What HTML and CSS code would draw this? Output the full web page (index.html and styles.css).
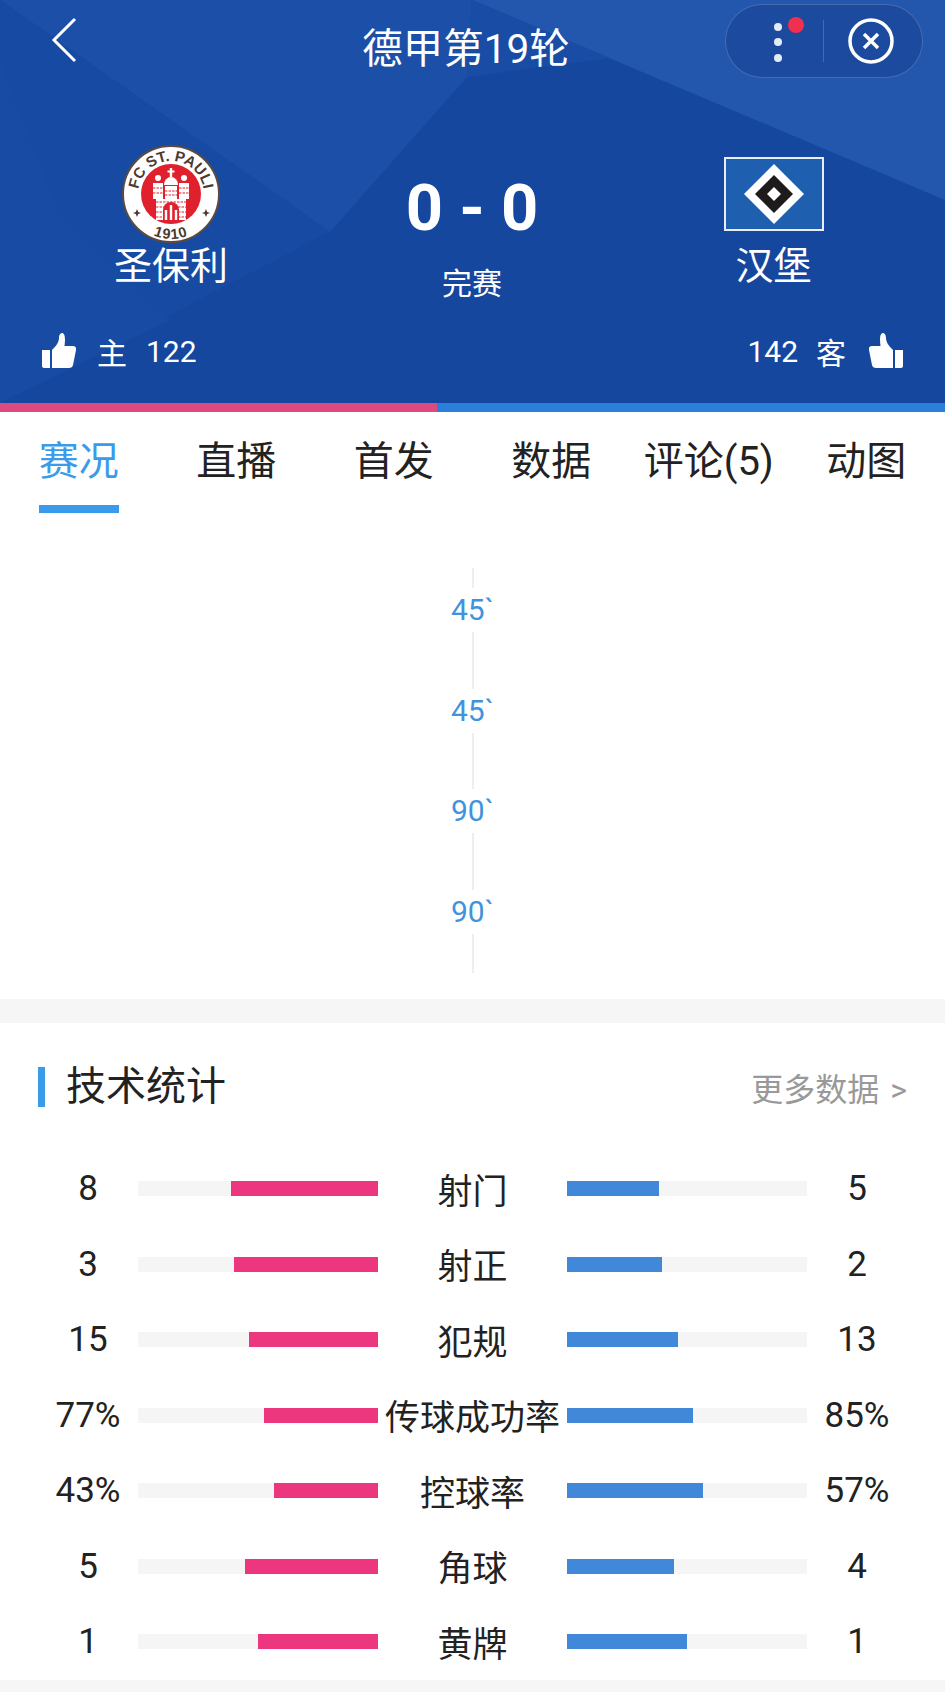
FILE: index.html
```html
<!DOCTYPE html>
<html lang="zh-CN">
  <head>
    <meta charset="UTF-8" />
    <meta name="viewport" content="width=device-width, initial-scale=1.0" />
    <title>德甲第19轮</title>
    <link rel="stylesheet" href="styles.css">
  </head>
  <body>
    <header class="match">
      <svg class="match-bg" viewBox="0 0 945 403" aria-hidden="true">
        <polygon points="0,0 472,0 467,77 330,232" fill="#1c50a8" />
        <polygon points="472,0 945,0 945,200" fill="#2257ad" />
        <polygon points="467,77 472,0 610,58" fill="#194da5" />
        <polygon points="0,0 330,232 0,403" fill="#174aa2" />
        <polygon points="60,215 170,320 0,403 0,60" fill="#184ba3" />
      </svg>

      <div class="topbar">
        <svg class="back" viewBox="0 0 26 46" width="26" height="46">
          <path d="M24 2 L3 23 L24 44" fill="none" stroke="#fff" stroke-width="3" />
        </svg>
        <h1 class="round">德甲第19轮</h1>
        <div class="capsule">
          <svg class="more" viewBox="0 0 40 50" width="40" height="50">
            <circle cx="10" cy="11" r="4" fill="#e4ebf6" />
            <circle cx="10" cy="26" r="4" fill="#e4ebf6" />
            <circle cx="10" cy="42" r="4" fill="#e4ebf6" />
            <circle cx="28" cy="9" r="8" fill="#f0304f" />
          </svg>
          <span class="capsule-line"></span>
          <svg class="close" viewBox="0 0 46 46" width="46" height="46">
            <circle cx="23" cy="23" r="21" fill="none" stroke="#fff" stroke-width="3.5" />
            <path d="M16 16 L30 30 M30 16 L16 30" fill="none" stroke="#fff" stroke-width="3.5" />
          </svg>
        </div>
      </div>

      <div class="teams">
        <div class="team">
          <div class="crest-box">
            <svg class="crest" viewBox="0 0 98 98" width="98" height="98">
              <defs>
                <path id="arcTop" d="M16 49 A33 33 0 0 1 82 49" />
                <path id="arcBottom" d="M4 49 A45 45 0 0 0 94 49" />
              </defs>
              <circle cx="49" cy="49" r="48" fill="#fff" stroke="#5b4a40" stroke-width="2" />
              <circle cx="49" cy="49" r="30" fill="#e0202c" />
              <text class="crest-text"><textPath href="#arcTop" startOffset="50%" text-anchor="middle">FC ST. PAULI</textPath></text>
              <text class="crest-year"><textPath href="#arcBottom" startOffset="50%" text-anchor="middle">1910</textPath></text>
              <polygon points="15,64 16.2,67 19,68 16.2,69 15,72 13.8,69 11,68 13.8,67" fill="#4a3a30" />
              <polygon points="84,64 85.2,67 88,68 85.2,69 84,72 82.8,69 80,68 82.8,67" fill="#4a3a30" />
              <g fill="#fff">
                <rect x="47.8" y="23" width="2.4" height="9" />
                <rect x="45.5" y="25.5" width="7" height="2" />
                <path d="M42 40 A7 8 0 0 1 56 40 Z" />
                <circle cx="36" cy="33" r="3" />
                <circle cx="62" cy="33" r="3" />
                <rect x="31" y="38" width="10" height="16" />
                <rect x="43" y="41" width="12" height="13" />
                <rect x="57" y="38" width="10" height="16" />
                <rect x="34" y="54" width="30" height="21" />
              </g>
              <g class="bricks">
                <path d="M31 43 H41 M31 48 H41 M43 46 H55 M43 50 H55 M57 43 H67 M57 48 H67" />
                <path d="M34 57 H64 M34 62 H42 M56 62 H64 M34 67 H42 M56 67 H64 M34 72 H42 M56 72 H64" />
              </g>
              <path d="M41 75 V65 A8 8 0 0 1 57 65 V75 Z" fill="#e0202c" />
              <path d="M44 75 V65 M49 75 V60 M54 75 V65" stroke="#fff" stroke-width="2.4" fill="none" />
            </svg>
          </div>
          <div class="team-name">圣保利</div>
        </div>

        <div class="result">
          <div class="score">0 - 0</div>
          <div class="status">完赛</div>
        </div>

        <div class="team">
          <div class="crest-box">
            <svg class="crest" viewBox="0 0 100 74" width="100" height="74">
              <rect x="1" y="1" width="98" height="72" fill="#1f5fb0" stroke="#e8eef6" stroke-width="2" />
              <polygon points="50,7 80,37 50,67 20,37" fill="#fff" />
              <polygon points="50,18 69,37 50,56 31,37" fill="#1d1b1c" />
              <polygon points="50,30 57,37 50,44 43,37" fill="#fff" />
            </svg>
          </div>
          <div class="team-name">汉堡</div>
        </div>
      </div>

      <div class="likes">
        <div class="like like-home">
          <svg class="thumb" viewBox="0 0 34 36" width="34" height="36">
            <path d="M0 17 H8 V35 H2 C1 35 0 34 0 33 Z M10 17 C13 14 17 10 17 5 C17 1 19 0 20.5 0 C23 1 23.5 5 22.5 13 H31 C33.5 13 34.5 15 34 17 L31 32 C30.7 34 29 35 27 35 H10 Z" fill="#fff" />
          </svg>
          <span class="side">主</span>
          <span>122</span>
        </div>
        <div class="like like-away">
          <span>142</span>
          <span class="side">客</span>
          <svg class="thumb thumb-away" viewBox="0 0 34 36" width="34" height="36">
            <path d="M0 17 H8 V35 H2 C1 35 0 34 0 33 Z M10 17 C13 14 17 10 17 5 C17 1 19 0 20.5 0 C23 1 23.5 5 22.5 13 H31 C33.5 13 34.5 15 34 17 L31 32 C30.7 34 29 35 27 35 H10 Z" fill="#fff" />
          </svg>
        </div>
      </div>
    </header>

    <div class="support">
      <div class="support-home"></div>
      <div class="support-away"></div>
    </div>

    <nav class="tabs">
      <div class="tab active"><span>赛况</span></div>
      <div class="tab"><span>直播</span></div>
      <div class="tab"><span>首发</span></div>
      <div class="tab"><span>数据</span></div>
      <div class="tab"><span>评论(5)</span></div>
      <div class="tab"><span>动图</span></div>
    </nav>

    <section class="timeline">
      <div class="axis">
        <div class="minute">45`</div>
        <div class="minute">45`</div>
        <div class="minute">90`</div>
        <div class="minute">90`</div>
      </div>
    </section>

    <div class="band"></div>

    <section class="stats">
      <div class="stats-head">
        <h2>技术统计</h2>
        <span class="more-data">更多数据 &gt;</span>
      </div>

      <div class="stat">
        <div class="value">8</div>
        <div class="track home"><div class="fill" style="width: 147px"></div></div>
        <div class="label">射门</div>
        <div class="track away"><div class="fill" style="width: 92px"></div></div>
        <div class="value">5</div>
      </div>
      <div class="stat">
        <div class="value">3</div>
        <div class="track home"><div class="fill" style="width: 144px"></div></div>
        <div class="label">射正</div>
        <div class="track away"><div class="fill" style="width: 95px"></div></div>
        <div class="value">2</div>
      </div>
      <div class="stat">
        <div class="value">15</div>
        <div class="track home"><div class="fill" style="width: 129px"></div></div>
        <div class="label">犯规</div>
        <div class="track away"><div class="fill" style="width: 111px"></div></div>
        <div class="value">13</div>
      </div>
      <div class="stat">
        <div class="value">77%</div>
        <div class="track home"><div class="fill" style="width: 114px"></div></div>
        <div class="label">传球成功率</div>
        <div class="track away"><div class="fill" style="width: 126px"></div></div>
        <div class="value">85%</div>
      </div>
      <div class="stat">
        <div class="value">43%</div>
        <div class="track home"><div class="fill" style="width: 104px"></div></div>
        <div class="label">控球率</div>
        <div class="track away"><div class="fill" style="width: 136px"></div></div>
        <div class="value">57%</div>
      </div>
      <div class="stat">
        <div class="value">5</div>
        <div class="track home"><div class="fill" style="width: 133px"></div></div>
        <div class="label">角球</div>
        <div class="track away"><div class="fill" style="width: 107px"></div></div>
        <div class="value">4</div>
      </div>
      <div class="stat">
        <div class="value">1</div>
        <div class="track home"><div class="fill" style="width: 120px"></div></div>
        <div class="label">黄牌</div>
        <div class="track away"><div class="fill" style="width: 120px"></div></div>
        <div class="value">1</div>
      </div>
    </section>

    <div class="band band-last"></div>
  </body>
</html>
```

FILE: styles.css
```css
* {
  box-sizing: border-box;
}

body {
  margin: 0;
  background-color: #fff;
  color: #222;
  font-family: Roboto, "Noto Sans CJK SC", sans-serif;
}

.match {
  position: relative;
  height: 403px;
  background-color: #15479f;
  color: #fff;
  overflow: hidden;
}

.match-bg {
  position: absolute;
  top: 0;
  left: 0;
  width: 945px;
  height: 403px;
}

.topbar,
.teams,
.likes {
  position: relative;
}

.topbar {
  display: grid;
  grid-template-columns: minmax(0, 1fr) auto minmax(0, 1fr);
  align-items: center;
  height: 82px;
  padding: 0 22px;
}

.back {
  margin: 0 0 2px 29px;
}

.round {
  margin: 17px 13px 0 0;
  font-size: 40.5px;
  font-weight: 400;
  line-height: 1;
}

.capsule {
  display: flex;
  align-items: center;
  justify-self: end;
  width: 198px;
  height: 74px;
  padding-left: 42px;
  border: 1px solid rgba(255, 255, 255, 0.18);
  border-radius: 37px;
  background-color: rgba(20, 60, 140, 0.45);
}

.capsule-line {
  width: 1px;
  height: 42px;
  margin-left: 15px;
  background-color: rgba(255, 255, 255, 0.18);
}

.close {
  margin-left: 24px;
}

.teams {
  display: grid;
  grid-template-columns: 342px 260px 343px;
  height: 251px;
}

.team {
  display: flex;
  flex-direction: column;
  align-items: center;
  padding-top: 63px;
}

.crest-box {
  display: flex;
  align-items: center;
  justify-content: center;
  height: 98px;
}

.crest {
  display: block;
}

.crest-text,
.crest-year {
  fill: #4a3a30;
  font-family: "Liberation Sans", sans-serif;
  font-weight: 700;
}

.crest-text {
  font-size: 15px;
}

.crest-year {
  font-size: 14.5px;
  letter-spacing: 1px;
}

.bricks {
  fill: none;
  stroke: #e0202c;
  stroke-width: 1;
  stroke-dasharray: 2.5 1;
}

.team-name {
  font-size: 38px;
  line-height: 46px;
  text-align: center;
}

.result {
  padding-top: 83px;
  text-align: center;
}

.score {
  height: 86px;
  font-size: 65px;
  font-weight: 700;
  line-height: 86px;
}

.status {
  margin-top: 12px;
  font-size: 30px;
  line-height: 42px;
}

.likes {
  display: flex;
  justify-content: space-between;
  padding: 0 42px;
}

.like {
  display: flex;
  align-items: center;
  height: 36px;
  font-size: 30px;
}

.like-home .side {
  margin: 0 19px 0 21px;
}

.like-away .side {
  margin: 0 20px 0 18px;
}

.thumb-away {
  transform: scaleX(-1);
  margin-left: 3px;
}

.support {
  display: flex;
  height: 9px;
}

.support-home {
  width: 437px;
  background-color: #dc4a7e;
}

.support-away {
  flex: 1;
  background-color: #2a7fdb;
}

.tabs {
  display: grid;
  grid-template-columns: repeat(6, 1fr);
  height: 101px;
}

.tab {
  display: flex;
  justify-content: center;
  font-size: 40px;
  line-height: 100px;
}

.tab.active span {
  height: 101px;
  color: #3a9bea;
  border-bottom: 8px solid #3a9bea;
}

.timeline {
  height: 486px;
  padding-top: 55px;
}

.axis {
  display: flex;
  flex-direction: column;
  gap: 56.7px;
  width: 90px;
  margin: 0 auto;
  padding: 20px 0 39px;
  background: linear-gradient(#eee, #eee) center / 2px 100% no-repeat;
}

.minute {
  height: 44px;
  background-color: #fff;
  color: #3f93dc;
  font-size: 30px;
  line-height: 44px;
  text-align: center;
}

.band {
  height: 24px;
  background-color: #f6f6f6;
}

.band-last {
  height: 13px;
}

.stats {
  padding: 0 38px;
}

.stats-head {
  display: flex;
  align-items: center;
  justify-content: space-between;
  height: 128px;
}

.stats-head h2 {
  margin: 0;
  padding-left: 21px;
  border-left: 7px solid #3a9bea;
  font-size: 40px;
  font-weight: 400;
  line-height: 40px;
}

.more-data {
  color: #999;
  font-size: 32px;
  word-spacing: 3px;
}

.stat {
  display: grid;
  grid-template-columns: 100px 240px 189px 240px 100px;
  align-items: center;
  height: 75.5px;
}

.value {
  font-size: 35px;
  text-align: center;
}

.label {
  margin-top: 8px;
  font-size: 35px;
  line-height: 1.2;
  text-align: center;
  white-space: nowrap;
}

.track {
  display: flex;
  height: 15px;
  background-color: #f5f5f5;
}

.track.home {
  justify-content: flex-end;
}

.track.home .fill {
  background-color: #ec377f;
}

.track.away .fill {
  background-color: #4189d8;
}
```
